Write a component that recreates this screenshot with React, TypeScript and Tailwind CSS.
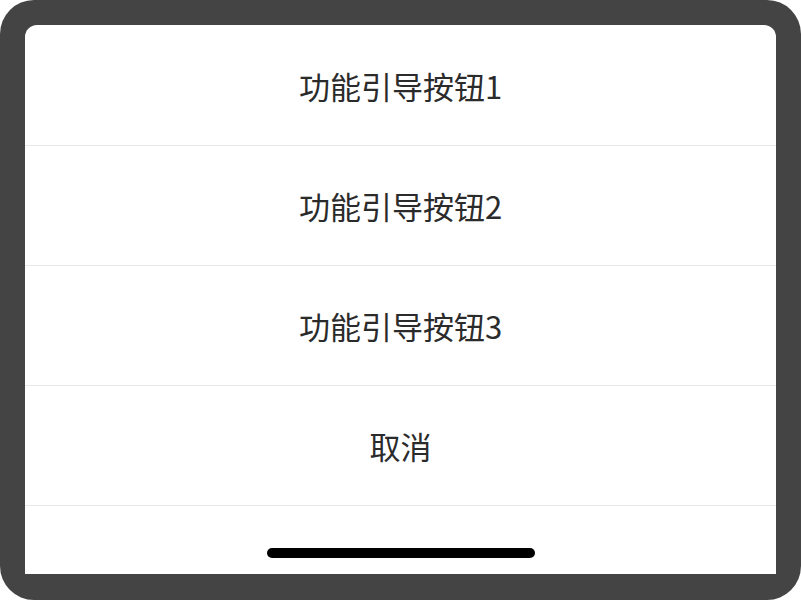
import React from "react";

const font = { fontFamily: '"Noto Sans CJK SC", "Noto Sans", sans-serif' };

export default function App() {
  const items = ["功能引导按钮1", "功能引导按钮2", "功能引导按钮3", "取消"];
  return (
    <div className="w-[801px] h-[600px] bg-white" style={font}>
      <div className="w-full h-full rounded-[34px] bg-[#444444] pt-[25px] px-[25px] pb-[26px]">
        <div className="w-full h-full bg-white rounded-t-[12px] flex flex-col overflow-hidden">
          {items.map((t, i) => (
            <div
              key={t}
              className={`${i === 0 ? "h-[121px]" : "h-[120px]"} shrink-0 border-b border-[#e8e8e8] flex items-center justify-center pt-[2px] text-[31px] text-[#2b2b2b]`}
            >
              {t}
            </div>
          ))}
          <div className="flex-1 flex items-end justify-center pb-[16px]">
            <div className="w-[268px] h-[10px] rounded-full bg-black" />
          </div>
        </div>
      </div>
    </div>
  );
}
